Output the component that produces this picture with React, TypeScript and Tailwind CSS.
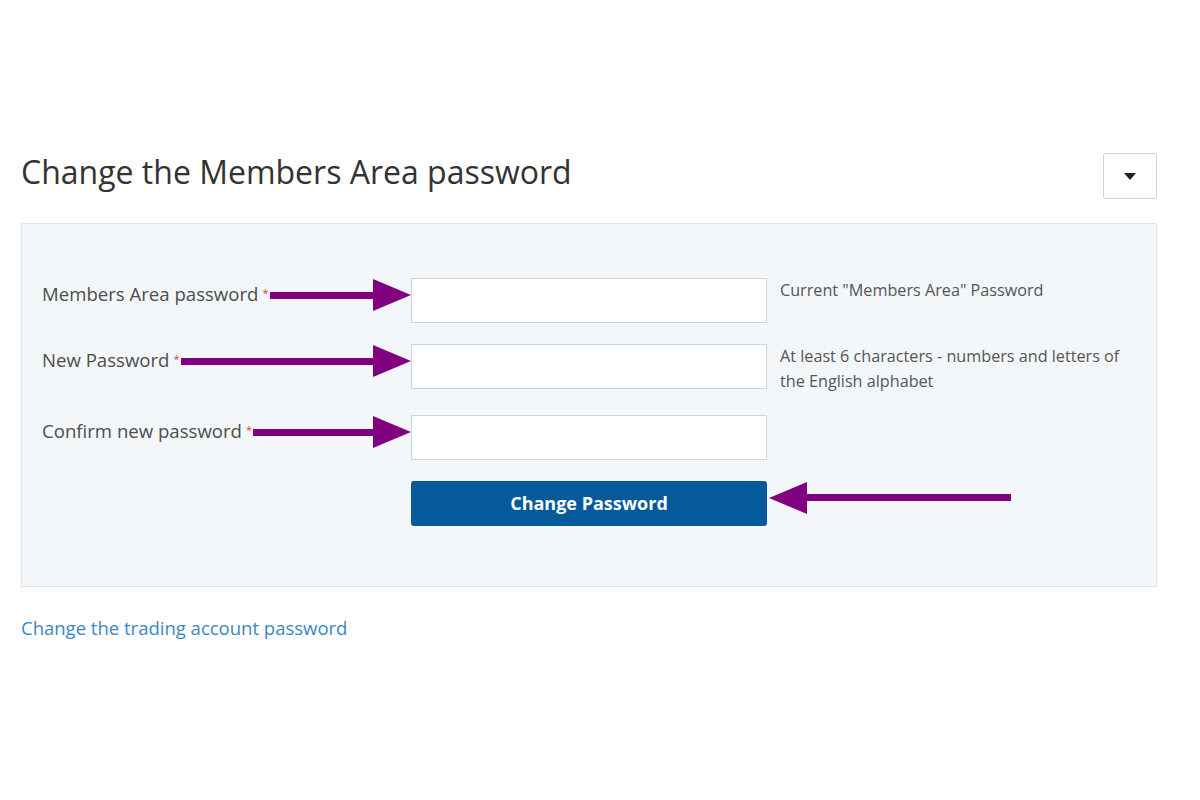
const font = { fontFamily: '"Open Sans", "Liberation Sans", sans-serif' };

// Purple annotation arrow: the shaft stretches, the head keeps its size
function Arrow({ left = false }: { left?: boolean }) {
  const head = (
    <svg width="38" height="32" viewBox="0 0 38 32" className="shrink-0" aria-hidden>
      <polygon fill="#800080" points={left ? '0,16 38,0 38,32' : '38,16 0,0 0,32'} />
    </svg>
  );
  return (
    <div className="flex h-[32px] w-full items-center">
      {left && head}
      <div className="h-[7px] flex-1 bg-[#800080]" />
      {!left && head}
    </div>
  );
}

interface FieldRowProps {
  label: string;
  help?: string[];
}

function FieldRow({ label, help }: FieldRowProps) {
  return (
    <div className="flex items-start">
      <div className="flex w-[369px] items-center pt-[3px]">
        <span className="whitespace-nowrap text-[18.6px] leading-[25px] text-[#4d4d4d]">
          {label}
          <span className="relative -top-[4px] ml-[4px] text-[11px] text-[#d04545]">*</span>
        </span>
        <div className="ml-[1px] flex h-[25px] flex-1 items-center">
          <Arrow />
        </div>
      </div>
      <input
        type="password"
        className="h-[45px] w-[356px] border border-[#cfd4d9] bg-white px-3 outline-none"
      />
      {help && (
        <div className="ml-[13px] text-[16.2px] leading-[25px] text-[#555]">
          {help.map((line) => (
            <div key={line}>{line}</div>
          ))}
        </div>
      )}
    </div>
  );
}

export default function App() {
  return (
    <div className="min-h-[800px] w-full bg-white px-[21px] pt-[153px]" style={font}>
      <div className="w-[1136px]">
        {/* Header */}
        <div className="flex h-[46px] items-start justify-between">
          <h1 className="text-[32px] leading-[38px] text-[#333]">Change the Members Area password</h1>
          <button className="flex h-[46px] w-[54px] items-center justify-center rounded-[2px] border border-[#cfd4d9] bg-white">
            <svg width="12" height="7" viewBox="0 0 12 7" aria-hidden>
              <polygon points="0,0 12,0 6,7" fill="#222" />
            </svg>
          </button>
        </div>

        {/* Form panel */}
        <div className="mt-[24px] flex h-[364px] flex-col gap-[21px] border border-[#e1e5e9] bg-[#f4f7fa] pl-[20px] pt-[54px]">
          <FieldRow label="Members Area password" help={['Current "Members Area" Password']} />
          <FieldRow
            label="New Password"
            help={['At least 6 characters - numbers and letters of', 'the English alphabet']}
          />
          <FieldRow label="Confirm new password" />
          <div className="flex items-center">
            <div className="w-[369px]" />
            <button className="h-[45px] w-[356px] rounded-[3px] bg-[#045a9b] text-[18px] font-bold text-white">
              Change Password
            </button>
            <div className="-mt-[12px] ml-[2px] w-[242px]">
              <Arrow left />
            </div>
          </div>
        </div>

        <a href="#" className="mt-[28px] inline-block text-[18.5px] leading-[26px] text-[#3a88c2]">
          Change the trading account password
        </a>
      </div>
    </div>
  );
}
